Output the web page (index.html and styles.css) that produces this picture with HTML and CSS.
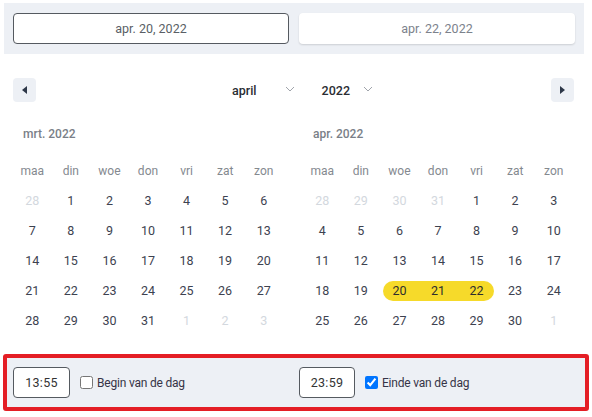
FILE: index.html
```html
<!DOCTYPE html>
<html>
<head>
<meta charset="utf-8">
<link rel="stylesheet" href="styles.css">
</head>
<body>
<div class="range">
  <div class="date-btn active">apr. 20, 2022</div>
  <div class="date-btn">apr. 22, 2022</div>
</div>

<div class="cal">
  <div class="nav">
    <div class="nav-btn"><svg width="7" height="8" viewBox="0 0 7 8"><polygon points="6,0 6,8 1,4" fill="#2d3748"/></svg></div>
    <div class="selects">
      <div class="sel sel-month"><span>april</span><svg class="chev" width="10" height="6" viewBox="0 0 10 6"><polyline points="1,1 5,5 9,1" fill="none" stroke="#a0a4ab" stroke-width="1"/></svg></div>
      <div class="sel sel-year"><span>2022</span><svg class="chev" width="10" height="6" viewBox="0 0 10 6"><polyline points="1,1 5,5 9,1" fill="none" stroke="#a0a4ab" stroke-width="1"/></svg></div>
    </div>
    <div class="nav-btn"><svg width="7" height="8" viewBox="0 0 7 8"><polygon points="1,0 1,8 6,4" fill="#2d3748"/></svg></div>
  </div>

  <div class="months">
    <div class="month">
      <div class="month-title">mrt. 2022</div>
      <div class="grid">
        <div class="wd">maa</div><div class="wd">din</div><div class="wd">woe</div><div class="wd">don</div><div class="wd">vri</div><div class="wd">zat</div><div class="wd">zon</div>
        <div class="d out"><span>28</span></div><div class="d"><span>1</span></div><div class="d"><span>2</span></div><div class="d"><span>3</span></div><div class="d"><span>4</span></div><div class="d"><span>5</span></div><div class="d"><span>6</span></div>
        <div class="d"><span>7</span></div><div class="d"><span>8</span></div><div class="d"><span>9</span></div><div class="d"><span>10</span></div><div class="d"><span>11</span></div><div class="d"><span>12</span></div><div class="d"><span>13</span></div>
        <div class="d"><span>14</span></div><div class="d"><span>15</span></div><div class="d"><span>16</span></div><div class="d"><span>17</span></div><div class="d"><span>18</span></div><div class="d"><span>19</span></div><div class="d"><span>20</span></div>
        <div class="d"><span>21</span></div><div class="d"><span>22</span></div><div class="d"><span>23</span></div><div class="d"><span>24</span></div><div class="d"><span>25</span></div><div class="d"><span>26</span></div><div class="d"><span>27</span></div>
        <div class="d"><span>28</span></div><div class="d"><span>29</span></div><div class="d"><span>30</span></div><div class="d"><span>31</span></div><div class="d out"><span>1</span></div><div class="d out"><span>2</span></div><div class="d out"><span>3</span></div>
      </div>
    </div>
    <div class="month">
      <div class="month-title">apr. 2022</div>
      <div class="grid">
        <div class="wd">maa</div><div class="wd">din</div><div class="wd">woe</div><div class="wd">don</div><div class="wd">vri</div><div class="wd">zat</div><div class="wd">zon</div>
        <div class="d out"><span>28</span></div><div class="d out"><span>29</span></div><div class="d out"><span>30</span></div><div class="d out"><span>31</span></div><div class="d"><span>1</span></div><div class="d"><span>2</span></div><div class="d"><span>3</span></div>
        <div class="d"><span>4</span></div><div class="d"><span>5</span></div><div class="d"><span>6</span></div><div class="d"><span>7</span></div><div class="d"><span>8</span></div><div class="d"><span>9</span></div><div class="d"><span>10</span></div>
        <div class="d"><span>11</span></div><div class="d"><span>12</span></div><div class="d"><span>13</span></div><div class="d"><span>14</span></div><div class="d"><span>15</span></div><div class="d"><span>16</span></div><div class="d"><span>17</span></div>
        <div class="d"><span>18</span></div><div class="d"><span>19</span></div><div class="d sel-d sel-start"><span>20</span></div><div class="d sel-d"><span>21</span></div><div class="d sel-d sel-end"><span>22</span></div><div class="d"><span>23</span></div><div class="d"><span>24</span></div>
        <div class="d"><span>25</span></div><div class="d"><span>26</span></div><div class="d"><span>27</span></div><div class="d"><span>28</span></div><div class="d"><span>29</span></div><div class="d"><span>30</span></div><div class="d out"><span>1</span></div>
      </div>
    </div>
  </div>
</div>

<div class="times">
  <div class="time-half">
    <div class="time-box">13:55</div>
    <label class="chk"><input type="checkbox"><span>Begin van de dag</span></label>
  </div>
  <div class="time-half">
    <div class="time-box">23:59</div>
    <label class="chk"><input type="checkbox" checked><span>Einde van de dag</span></label>
  </div>
</div>
</body>
</html>
```

FILE: styles.css
```css
* { box-sizing: border-box; }
body {
  margin: 0;
  font-family: Roboto, "Noto Sans", sans-serif;
  color: #3a3f4a;
  background: #fff;
  width: 592px;
}
.range {
  margin: 3px 0 0 4px;
  width: 580px;
  height: 51px;
  background: #edf0f5;
  padding: 10px 9px 10px 9px;
  display: flex;
  gap: 10px;
}
.date-btn {
  width: 276px;
  height: 31px;
  background: #fff;
  border-radius: 4px;
  display: flex;
  align-items: center;
  justify-content: center;
  font-size: 12.5px;
  color: #7c828c;
  box-shadow: 0 1px 2px rgba(0,0,0,0.14);
}
.date-btn.active {
  border: 1px solid #555a60;
  color: #5a5f66;
  box-shadow: none;
}
.cal {
  margin: 24px 0 0 13px;
  width: 561px;
}
.nav {
  display: flex;
  align-items: center;
  height: 24px;
}
.nav-btn {
  width: 23px;
  height: 24px;
  background: #edf0f5;
  border-radius: 4px;
  display: flex;
  align-items: center;
  justify-content: center;
}
.selects {
  flex: 1;
  display: flex;
  justify-content: center;
  padding-left: 18px;
  gap: 27px;
}
.sel {
  display: flex;
  align-items: center;
  font-size: 12.5px;
  font-weight: 500;
  color: #2a2d33;
}
.sel-month { gap: 28px; }
.sel-year { gap: 13px; }
.chev { margin-top: -3px; }
.months {
  display: flex;
  gap: 20px;
  margin-top: 24px;
}
.month { width: 270px; }
.month-title {
  padding-left: 10px;
  font-size: 12px;
  font-weight: 500;
  color: #7a7f88;
  height: 16px;
  line-height: 16px;
}
.grid {
  margin-top: 14px;
  display: grid;
  grid-template-columns: repeat(7, 1fr);
  grid-auto-rows: 30px;
}
.wd {
  display: flex;
  align-items: center;
  justify-content: center;
  font-size: 12px;
  color: #84898f;
}
.d {
  display: flex;
  align-items: center;
  font-size: 12.5px;
  color: #3d4250;
}
.d span {
  flex: 1;
  height: 20px;
  line-height: 20px;
  text-align: center;
}
.d.out { color: #d3d8de; }
.sel-d span { background: #f6da2a; color: #2d2d2d; }
.sel-start span { margin-left: 3px; border-radius: 10px 0 0 10px; padding-right: 3px; }
.sel-end span { margin-right: 2px; border-radius: 0 10px 10px 0; padding-left: 2px; }
.times {
  margin: 18px 0 0 3px;
  width: 586px;
  height: 57px;
  border: 4px solid #e41e25;
  border-radius: 3px;
  background: #edf0f5;
  padding: 0 0 0 6px;
  display: flex;
  align-items: center;
  gap: 10px;
}
.time-half {
  width: 276px;
  display: flex;
  align-items: center;
}
.time-box {
  width: 57px;
  height: 31px;
  background: #fff;
  border: 1px solid #555a60;
  border-radius: 4px;
  display: flex;
  align-items: center;
  justify-content: center;
  font-size: 12.5px;
  letter-spacing: 0.3px;
  color: #333;
}
.time-half:last-child .time-box { width: 56px; }
.chk {
  display: flex;
  align-items: center;
  font-size: 12px;
  letter-spacing: -0.2px;
  color: #363447;
}
.chk input {
  width: 13px;
  height: 13px;
  margin: 0 4px 0 10px;
}
```
